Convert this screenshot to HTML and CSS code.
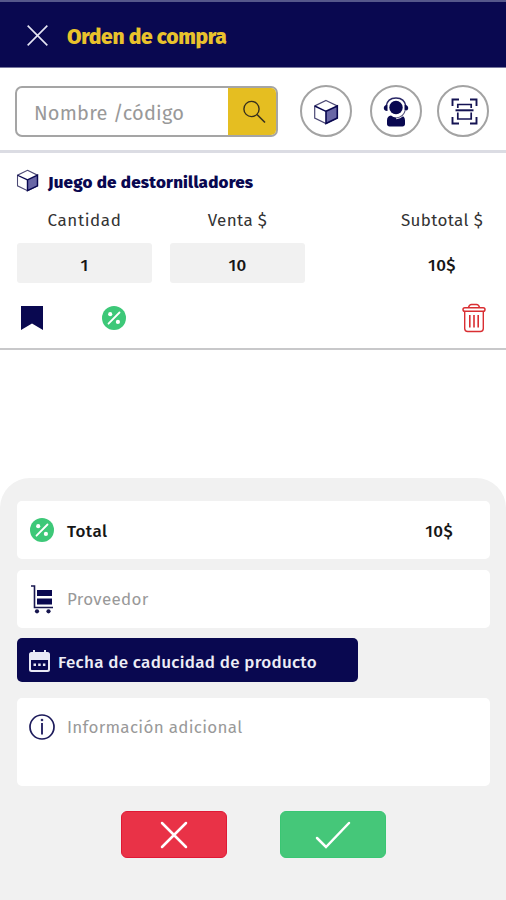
FILE: index.html
```html
<!DOCTYPE html>
<html lang="es">
<head>
<meta charset="utf-8">
<title>Orden de compra</title>
<link rel="stylesheet" href="styles.css">
</head>
<body>
<svg class="defs" aria-hidden="true">
  <symbol id="cube" viewBox="0 0 26 26">
    <path d="M13 1.500 24.300 7V19L13 24.500 1.700 19V7Z" fill="#fff" stroke="#4c4975" stroke-width="1.200"/>
    <path d="M13 12.300 24.300 7V19L13 24.500Z" fill="#6967a6" stroke="#090850" stroke-width="1.600"/>
    <path d="M1.700 7 13 12.300" fill="none" stroke="#090850" stroke-width="1.400"/>
  </symbol>
  <symbol id="percent" viewBox="0 0 24 24">
    <circle cx="12" cy="12" r="12" fill="#3dc878"/>
    <path d="M6.500 17.700 17.500 6.500" stroke="#fff" stroke-width="1.800" stroke-linecap="round"/>
    <circle cx="8.200" cy="8.200" r="2.100" fill="#fff"/><circle cx="15.900" cy="15.900" r="2.100" fill="#fff"/>
  </symbol>
</svg>
<header class="header">
  <svg class="close" viewBox="0 0 22 22"><path d="M.7.7 21.300 21.300M21.300.7.7 21.300" stroke="#e5e5f3" stroke-width="1.700"/></svg>
  <h1 class="title">Orden de compra</h1>
</header>
<section class="toolbar">
  <div class="search">
    <span class="search-text">Nombre /código</span>
    <div class="search-button"><svg viewBox="0 0 24 24" width="24" height="24"><circle cx="9.500" cy="9" r="7.600" fill="none" stroke="#37301e" stroke-width="1.400"/><path d="m15 14.500 8 8" stroke="#37301e" stroke-width="1.600"/></svg></div>
  </div>
  <div class="round"><svg width="26" height="26"><use href="#cube"/></svg></div>
  <div class="round support"><svg width="26" height="30" viewBox="0 0 26 30">
    <path d="M3 9.500C4 3.500 8 1 13 1s9 2.500 10 8.500" fill="none" stroke="#292766" stroke-width="1.500"/>
    <circle cx="13" cy="10.500" r="6.700" fill="#090850"/>
    <path d="M4.500 8v6C1.500 14 .8 12.500.8 11s.8-3 3.700-3ZM21.500 8v6c3 0 3.700-1.500 3.700-3s-.8-3-3.700-3Z" fill="#090850"/>
    <path d="M4 23.500c0-3 1.500-4.500 4-5 3 2.500 7 2.500 10 0 2.500.5 4 2 4 5V27c0 1.500-1 2.500-2.500 2.500h-13C5 29.500 4 28.500 4 27Z" fill="#090850"/>
    <path d="M22 13c-1 4.500-4.500 7-9 7.500" fill="none" stroke="#fff" stroke-width="3.400"/>
    <path d="M22.300 13c-1 4.700-4.600 7.500-9.300 8" fill="none" stroke="#56547f" stroke-width="1.200"/>
  </svg></div>
  <div class="round"><svg width="27" height="27" viewBox="0 0 27 27" fill="none" stroke="#141353">
    <path d="M8 1.500H1.500V8M19 1.500h6.500V8M8 25.500H1.500V19M19 25.500h6.500V19" stroke-width="1.900"/>
    <path d="M6.800 10V6.500h13.400V10M6.800 14.500V21h13.400v-6.500" stroke-width="1.700"/><path d="M4.500 12.300h18" stroke-width="2"/>
  </svg></div>
</section>
<section class="item">
  <div class="item-head"><svg width="23" height="23"><use href="#cube"/></svg><h2 class="item-name">Juego de destornilladores</h2></div>
  <div class="fields">
    <div class="field"><span class="label cantidad">Cantidad</span><div class="value boxed">1</div></div>
    <div class="field"><span class="label venta">Venta $</span><div class="value boxed">10</div></div>
    <div class="field last"><span class="label subtotal">Subtotal $</span><div class="value">10$</div></div>
  </div>
  <div class="actions">
    <svg width="22" height="24" viewBox="0 0 22 24"><path d="M0 0h22v24L11 17.500 0 24Z" fill="#090850"/></svg>
    <svg class="discount" width="24" height="24"><use href="#percent"/></svg>
    <svg class="trash" width="24" height="30" viewBox="0 0 24 30" fill="none" stroke="#d92e32">
      <path d="M6.500 4.500C7 2.500 8 1.500 9.500 1.500h5c1.500 0 2.500 1 3 3" stroke-width="1.400"/><rect x="1" y="4.700" width="22" height="3.600" rx="1.800" stroke-width="1.500"/>
      <path d="M2.700 9v16.500c0 2 1.300 3 3 3h12.600c1.700 0 3-1 3-3V9" stroke-width="1.400"/><path d="M7.800 12v12.500M12 12v12.500M16.200 12v12.500" stroke-width="1.600"/>
    </svg>
  </div>
</section>
<main class="sheet">
  <div class="card total"><svg width="24" height="24"><use href="#percent"/></svg><span class="strong total-label">Total</span><span class="strong amount">10$</span></div>
  <div class="card supplier"><svg width="24" height="29" viewBox="0 0 24 29">
    <path d="M1 1h3.500v21.500H23" fill="none" stroke="#17164f" stroke-width="1.600"/><path d="M7 5h15v6H7ZM7 13.500h15v6H7Z" fill="#090850"/><circle cx="7" cy="26.300" r="2.100" fill="#17164f"/><circle cx="18.500" cy="26.300" r="2.100" fill="#17164f"/>
  </svg><span class="hint proveedor">Proveedor</span></div>
  <div class="date"><svg width="21" height="22" viewBox="0 0 21 22">
    <path fill="#e9e9f5" fill-rule="evenodd" d="M4 0h2v2h9V0h2v2h1.500A2.500 2.500 0 0 1 21 4.500v15a2.500 2.500 0 0 1-2.500 2.500h-16A2.500 2.500 0 0 1 0 19.500v-15A2.500 2.500 0 0 1 2.500 2H4ZM2 10v9.300c0 .5.3.7.8.7h15.400c.5 0 .8-.2.8-.7V10Z"/><path d="M4.500 13.500h2.500v2.500H4.500ZM9.200 13.500h2.500v2.500H9.200ZM13.900 13.500h2.500v2.500h-2.500Z" fill="#e9e9f5"/>
  </svg><span class="date-text">Fecha de caducidad de producto</span></div>
  <div class="card info"><svg width="26" height="26" viewBox="0 0 26 26"><circle cx="13" cy="13" r="12" fill="none" stroke="#1d1b5b" stroke-width="1.700"/><path d="M13 9V20.500" stroke="#302d6b" stroke-width="2"/><circle cx="13" cy="6" r="1.300" fill="#302d6b"/></svg><span class="hint informacion">Información adicional</span></div>
  <div class="buttons">
    <div class="button cancel"><svg width="28" height="28" viewBox="0 0 28 28"><path d="m2 2 24 24M26 2 2 26" stroke="#fff" stroke-width="2.500" stroke-linecap="round"/></svg></div>
    <div class="button accept"><svg width="36" height="28" viewBox="0 0 36 28"><path d="M2 17 11 26 34 2" fill="none" stroke="#fff" stroke-width="2.500" stroke-linecap="round"/></svg></div>
  </div>
</main>
</body>
</html>
```
FILE: styles.css
```css
* { box-sizing: border-box; }
body { margin: 0; width: 506px; height: 900px; overflow: hidden; background: #fff; color: #161616; font-family: "Fira Sans", "Noto Sans", sans-serif; }
h1, h2 { margin: 0; }
svg { display: block; flex-shrink: 0; }
.defs { display: none; }
span, h1, h2 { white-space: nowrap; }
.header { height: 68px; padding: 1px 0 0 27px; display: flex; align-items: center; background: #090850; border-top: 2px solid #55578b; border-bottom: 1px solid #77779e; }
.close { width: 21px; height: 21px; }
.title { margin: 3px 0 0 19px; color: #e9c22c; font-size: 21px; line-height: 28px; font-weight: 800; letter-spacing: -.3px; }
.toolbar { height: 85px; padding: 4px 0 0 15px; display: flex; align-items: center; border-bottom: 3px solid #dbdce3; }
.search { width: 263px; height: 51px; display: flex; overflow: hidden; border: 2px solid #a5a5a5; border-radius: 7px; }
.search-text { flex: 1; padding-left: 17px; color: #999; font-size: 20px; line-height: 51px; letter-spacing: .2px; }
.search-button { width: 48px; padding: 2px 0 0 4px; display: flex; align-items: center; justify-content: center; background: #e5be21; }
.round { width: 52px; height: 52px; margin-left: 22px; padding-top: 1px; display: flex; align-items: center; justify-content: center; border: 2px solid #a3a3a3; border-radius: 50%; }
.round.support { margin: 0 -3px 0 18px; }
.round:last-child { margin-left: 18px; }
.round:last-child svg { margin-left: 2px; }
.item { height: 197px; padding: 16px 17px 0; border-bottom: 2px solid #c8c8ca; }
.item-head { height: 24px; margin-left: -1px; display: flex; align-items: center; }
.item-head svg { margin-top: -1px; }
.item-name { margin: 3px 0 0 9px; color: #090850; font-size: 17px; line-height: 24px; font-weight: 800; letter-spacing: .2px; }
.fields { height: 91px; display: flex; gap: 18px; }
.field { width: 135px; text-align: center; }
.field.last { width: 84px; margin-left: 77px; }
.label { display: block; height: 50px; line-height: 56px; font-size: 17px; color: #333; letter-spacing: .35px; }
.cantidad { letter-spacing: .6px; }
.value { height: 40px; line-height: 46px; font-size: 17px; font-weight: 500; letter-spacing: .4px; }
.boxed { background: #f1f1f1; border-radius: 3px; }
.actions { height: 68px; padding: 0 3px 0 4px; display: flex; align-items: center; }
.discount { margin-left: 59px; }
.trash { margin-left: auto; }
.sheet { height: 422px; margin-top: 128px; padding: 23px 16px 0 17px; background: #f1f1f1; border-radius: 30px 30px 0 0; }
.card { display: flex; align-items: center; padding-left: 13px; background: #fff; border-radius: 5px; }
.total { height: 58px; padding-right: 37px; }
.strong { margin-top: 2px; font-size: 17px; font-weight: 500; letter-spacing: .4px; }
.total-label { margin-left: 13px; }
.amount { margin-left: auto; }
.supplier { height: 58px; margin-top: 11px; }
.hint { margin-left: 13px; color: #999; font-size: 17px; letter-spacing: .3px; }
.date { width: 341px; height: 44px; margin-top: 10px; padding-left: 12px; display: flex; align-items: center; background: #090850; border-radius: 5px; }
.date svg { margin-top: 2px; }
.date-text { margin: 4px 0 0 8px; color: #ededf6; font-size: 17px; font-weight: 500; letter-spacing: .28px; }
.info { height: 88px; margin-top: 16px; padding: 16px 0 0 12px; align-items: flex-start; }
.informacion { margin-left: 12px; line-height: 28px; }
.buttons { display: flex; gap: 53px; margin: 25px 0 0 104px; }
.button { width: 106px; height: 47px; display: flex; align-items: center; justify-content: center; border-radius: 6px; }
.cancel { background: #e93247; border: 1px solid #df1935; }
.accept { background: #45c779; border: 1px solid #3ac673; }
```
